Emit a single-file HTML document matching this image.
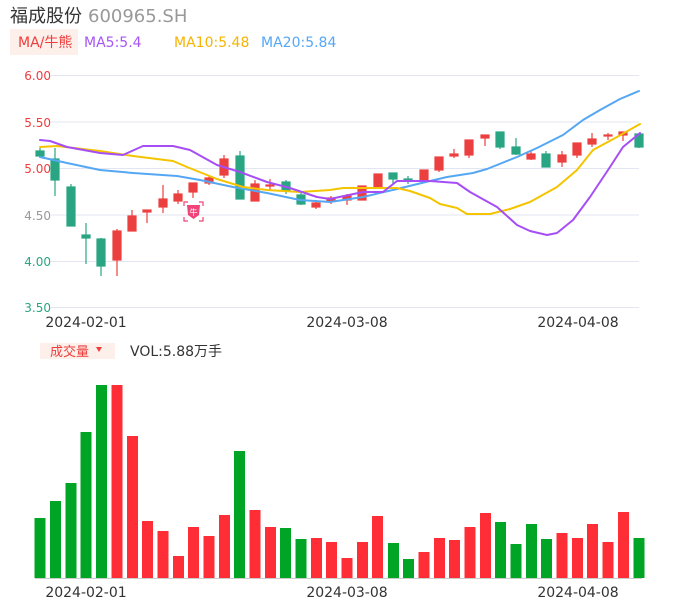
<!DOCTYPE html>
<html><head><meta charset="utf-8"><style>
body{margin:0;width:686px;height:606px;background:#fff;overflow:hidden;font-family:"Liberation Sans","Noto Sans CJK SC",sans-serif;}
svg{position:absolute;left:0;top:0}
</style></head><body>
<svg width="686" height="606" xmlns="http://www.w3.org/2000/svg" font-family="DejaVu Sans, Noto Sans CJK SC, sans-serif">
<text x="10" y="22" font-size="18" fill="#333">福成股份</text>
<text x="88" y="22" font-size="18" fill="#999">600965.SH</text>
<rect x="10" y="29" width="68" height="26" fill="#fdefe9"/>
<text x="18" y="47" font-size="14" fill="#f03c3c">MA/牛熊</text>
<text x="84" y="47" font-size="14" fill="#a855f7">MA5:5.4</text>
<text x="174" y="47" font-size="14" fill="#f5b400">MA10:5.48</text>
<text x="261" y="47" font-size="14" fill="#55a7f4">MA20:5.84</text>
<g stroke="#e3e6f0" stroke-width="1">
<line x1="51" y1="75.5" x2="639" y2="75.5"/><line x1="51" y1="122" x2="639" y2="122"/>
<line x1="51" y1="168.5" x2="639" y2="168.5"/><line x1="51" y1="215" x2="639" y2="215"/>
<line x1="51" y1="261.5" x2="639" y2="261.5"/><line x1="51" y1="307.5" x2="639" y2="307.5"/>
</g>
<g font-size="12" text-anchor="end">
<text x="51" y="80" fill="#f03c3c">6.00</text><text x="51" y="127" fill="#f03c3c">5.50</text>
<text x="51" y="173" fill="#f03c3c">5.00</text><text x="51" y="220" fill="#999">4.50</text>
<text x="51" y="266" fill="#2aa583">4.00</text><text x="51" y="312" fill="#2aa583">3.50</text>
</g>
<g font-size="14" fill="#333" text-anchor="middle">
<text x="86" y="327">2024-02-01</text><text x="347" y="327">2024-03-08</text><text x="578" y="327">2024-04-08</text>
<text x="86" y="597">2024-02-01</text><text x="347" y="597">2024-03-08</text><text x="578" y="597">2024-04-08</text>
</g>
<g stroke-width="1.2">
<g fill="#2aa583" stroke="#2aa583">
<line x1="40" y1="148" x2="40" y2="158"/><rect x="36" y="151" width="8" height="5"/>
<line x1="55" y1="148" x2="55" y2="196"/><rect x="51" y="159" width="8" height="21"/>
<line x1="71" y1="184" x2="71" y2="226"/><rect x="67" y="187" width="8" height="39"/>
<line x1="86" y1="223" x2="86" y2="264"/><rect x="82" y="235" width="8" height="3"/>
<line x1="101" y1="238" x2="101" y2="276"/><rect x="97" y="239" width="8" height="27"/>
<line x1="240" y1="151" x2="240" y2="199"/><rect x="236" y="156" width="8" height="43"/>
<line x1="286" y1="180" x2="286" y2="194"/><rect x="282" y="182" width="8" height="9"/>
<line x1="301" y1="193" x2="301" y2="205"/><rect x="297" y="195" width="8" height="9"/>
<line x1="393" y1="173" x2="393" y2="184"/><rect x="389" y="173" width="8" height="6"/>
<line x1="408" y1="176" x2="408" y2="184"/><rect x="404" y="179" width="8" height="2"/>
<line x1="500" y1="132" x2="500" y2="149"/><rect x="496" y="132" width="8" height="15"/>
<line x1="516" y1="138" x2="516" y2="155"/><rect x="512" y="147" width="8" height="7"/>
<line x1="546" y1="151" x2="546" y2="167"/><rect x="542" y="154" width="8" height="13"/>
<line x1="639" y1="134" x2="639" y2="148"/><rect x="635" y="134" width="8" height="13"/>
</g>
<g fill="#ec4040" stroke="#ec4040">
<line x1="117" y1="229" x2="117" y2="276"/><rect x="113" y="231" width="8" height="29"/>
<line x1="132" y1="210" x2="132" y2="231"/><rect x="128" y="216" width="8" height="15"/>
<line x1="147" y1="210" x2="147" y2="223"/><rect x="143" y="210" width="8" height="2"/>
<line x1="163" y1="185" x2="163" y2="213"/><rect x="159" y="199" width="8" height="8"/>
<line x1="178" y1="190" x2="178" y2="204"/><rect x="174" y="194" width="8" height="7"/>
<line x1="193" y1="183" x2="193" y2="198"/><rect x="189" y="183" width="8" height="9"/>
<line x1="209" y1="175" x2="209" y2="185"/><rect x="205" y="178" width="8" height="5"/>
<line x1="224" y1="155" x2="224" y2="178"/><rect x="220" y="159" width="8" height="16"/>
<line x1="255" y1="180" x2="255" y2="201"/><rect x="251" y="184" width="8" height="17"/>
<line x1="270" y1="179" x2="270" y2="190"/><rect x="266" y="185" width="8" height="1"/>
<line x1="316" y1="200" x2="316" y2="209"/><rect x="312" y="203" width="8" height="4"/>
<line x1="331" y1="196" x2="331" y2="204"/><rect x="327" y="198" width="8" height="3"/>
<line x1="347" y1="194" x2="347" y2="205"/><rect x="343" y="196" width="8" height="4"/>
<line x1="362" y1="186" x2="362" y2="200"/><rect x="358" y="186" width="8" height="14"/>
<line x1="378" y1="174" x2="378" y2="188"/><rect x="374" y="174" width="8" height="14"/>
<line x1="424" y1="170" x2="424" y2="182"/><rect x="420" y="170" width="8" height="10"/>
<line x1="439" y1="157" x2="439" y2="172"/><rect x="435" y="157" width="8" height="13"/>
<line x1="454" y1="149" x2="454" y2="158"/><rect x="450" y="154" width="8" height="2"/>
<line x1="469" y1="140" x2="469" y2="158"/><rect x="465" y="140" width="8" height="15"/>
<line x1="485" y1="135" x2="485" y2="146"/><rect x="481" y="135" width="8" height="3"/>
<line x1="531" y1="151" x2="531" y2="160"/><rect x="527" y="154" width="8" height="5"/>
<line x1="562" y1="151" x2="562" y2="167"/><rect x="558" y="155" width="8" height="7"/>
<line x1="577" y1="143" x2="577" y2="158"/><rect x="573" y="143" width="8" height="12"/>
<line x1="592" y1="133" x2="592" y2="147"/><rect x="588" y="139" width="8" height="5"/>
<line x1="608" y1="133" x2="608" y2="140"/><rect x="604" y="135" width="8" height="1"/>
<line x1="623" y1="132" x2="623" y2="141"/><rect x="619" y="132" width="8" height="3"/>
</g>
</g>
<g fill="none" stroke-width="2" stroke-linejoin="round" stroke-linecap="round">
<polyline stroke="#55a7f4" points="40,157 67,163 100,170 133,173 177,176 200,180 233,187 267,193 300,200 330,202 363,197 397,189 430,181 447,177 473,173 487,169 517,157 537,148 563,135 583,120 600,110 620,99 639,91"/>
<polyline stroke="#f5c400" points="40,147 57,146 100,151 133,156 173,161 187,167 217,179 243,187 267,190 300,192 330,190 343,188 397,188 410,191 430,198 440,204 457,208 467,214 490,214 510,209 530,202 557,187 577,170 593,150 617,137 640,124"/>
<polyline stroke="#a64ef5" points="40,140 50,141 67,147 100,153 123,155 143,146 173,146 190,150 217,165 240,172 267,182 290,188 317,197 330,199 363,192 383,192 397,181 430,181 457,183 470,192 497,207 517,225 530,231 547,235 557,233 573,220 590,197 610,167 623,147 640,133"/>
</g>
<g fill="none" stroke="#f0447a" stroke-width="1.2">
<path d="M184,206v-4h4M199,202h4v4M184,217v4h4M199,221h4v-4"/>
</g>
<path d="M187,205 L200,205 L199,215 L193.5,219 L188,215 Z" fill="#f0447a"/>
<text x="193.5" y="215" font-size="8" fill="#fff" text-anchor="middle">牛</text>
<rect x="40" y="343" width="75" height="16" fill="#fdefe9"/>
<text x="50" y="356" font-size="13" fill="#f03c3c">成交量</text>
<path d="M96,347 L102,347 L99,352 Z" fill="#f03c3c"/>
<text x="130" y="356" font-size="14" fill="#333">VOL:5.88万手</text>
<line x1="35" y1="578.5" x2="642" y2="578.5" stroke="#ccc"/>
<g fill="#00a525">
<rect x="34.5" y="518" width="11" height="60"/><rect x="50" y="501" width="11" height="77"/>
<rect x="65.5" y="483" width="11" height="95"/><rect x="80.5" y="432" width="11" height="146"/>
<rect x="96" y="385" width="11" height="193"/><rect x="234" y="451" width="11" height="127"/>
<rect x="280" y="528" width="11" height="50"/><rect x="295.5" y="539" width="11" height="39"/>
<rect x="388" y="543" width="11" height="35"/><rect x="403" y="559" width="11" height="19"/>
<rect x="495" y="522" width="11" height="56"/><rect x="510.5" y="544" width="11" height="34"/>
<rect x="526" y="524" width="11" height="54"/><rect x="541" y="539" width="11" height="39"/>
<rect x="633.5" y="538" width="11" height="40"/>
</g>
<g fill="#ff2d35">
<rect x="111.5" y="385" width="11" height="193"/><rect x="127" y="436" width="11" height="142"/>
<rect x="142" y="521" width="11" height="57"/><rect x="157.5" y="531" width="11" height="47"/>
<rect x="173" y="556" width="11" height="22"/><rect x="188" y="527" width="11" height="51"/>
<rect x="203.5" y="536" width="11" height="42"/><rect x="219" y="515" width="11" height="63"/>
<rect x="249.5" y="510" width="11" height="68"/><rect x="265" y="527" width="11" height="51"/>
<rect x="311" y="538" width="11" height="40"/><rect x="326" y="542" width="11" height="36"/>
<rect x="341.5" y="558" width="11" height="20"/><rect x="357" y="542" width="11" height="36"/>
<rect x="372" y="516" width="11" height="62"/><rect x="418.5" y="552" width="11" height="26"/>
<rect x="434" y="538" width="11" height="40"/><rect x="449" y="540" width="11" height="38"/>
<rect x="464.5" y="527" width="11" height="51"/><rect x="480" y="513" width="11" height="65"/>
<rect x="556.5" y="533" width="11" height="45"/><rect x="572" y="538" width="11" height="40"/>
<rect x="587" y="524" width="11" height="54"/><rect x="602.5" y="542" width="11" height="36"/>
<rect x="618" y="512" width="11" height="66"/>
</g>
</svg>
</body></html>
